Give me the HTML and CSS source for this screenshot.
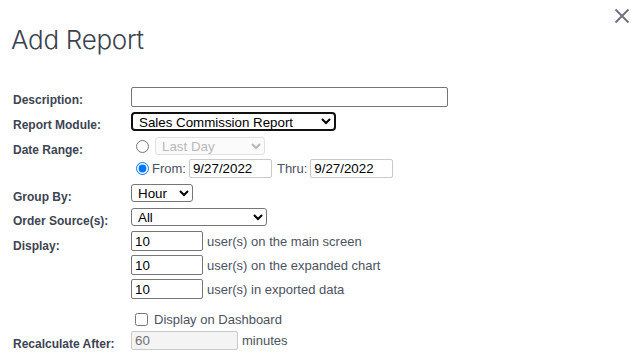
FILE: index.html
```html
<!DOCTYPE html>
<html>
<head>
<meta charset="utf-8">
<link rel="stylesheet" href="styles.css">
</head>
<body>
<div class="dialog">
  <div class="head">
    <h1 class="title">Add Report</h1>
    <button class="close" aria-label="Close">
      <svg width="16" height="16" viewBox="0 0 16 16"><path d="M1.5 1.5 L14.5 14.5 M14.5 1.5 L1.5 14.5" stroke="#6f7580" stroke-width="2" fill="none"/></svg>
    </button>
  </div>
  <form class="form">
    <div class="row r-desc">
      <label class="lbl">Description:</label>
      <div class="ctl"><input type="text" class="inp desc"></div>
    </div>
    <div class="row r-mod">
      <label class="lbl">Report Module:</label>
      <div class="ctl"><select class="sel module"><option>Sales Commission Report</option></select></div>
    </div>
    <div class="row r-date">
      <label class="lbl">Date Range:</label>
      <div class="ctl col">
        <div class="line"><input type="radio" name="dr" class="radio"><select class="sel dis lastday" disabled><option>Last Day</option></select></div>
        <div class="line l-from"><input type="radio" name="dr" class="radio" checked><span class="txt">From:</span><input type="text" class="inp light date" value="9/27/2022"><span class="txt thru">Thru:</span><input type="text" class="inp light date" value="9/27/2022"></div>
      </div>
    </div>
    <div class="row r-group">
      <label class="lbl">Group By:</label>
      <div class="ctl"><select class="sel group"><option>Hour</option></select></div>
    </div>
    <div class="row r-src">
      <label class="lbl">Order Source(s):</label>
      <div class="ctl"><select class="sel src"><option>All</option></select></div>
    </div>
    <div class="row r-disp">
      <label class="lbl">Display:</label>
      <div class="ctl col gap4">
        <div class="line"><input type="text" class="inp num" value="10"><span class="txt">user(s) on the main screen</span></div>
        <div class="line"><input type="text" class="inp num" value="10"><span class="txt">user(s) on the expanded chart</span></div>
        <div class="line"><input type="text" class="inp num" value="10"><span class="txt">user(s) in exported data</span></div>
      </div>
    </div>
    <div class="row r-dash">
      <span class="lbl"></span>
      <div class="ctl"><label class="line"><input type="checkbox" class="chk"><span class="txt">Display on Dashboard</span></label></div>
    </div>
    <div class="row r-recalc">
      <label class="lbl">Recalculate After:</label>
      <div class="ctl"><div class="line"><input type="text" class="inp light recalc" value="60" disabled><span class="txt">minutes</span></div></div>
    </div>
  </form>
</div>
</body>
</html>
```
FILE: styles.css
```css
html, body {
  margin: 0;
  padding: 0;
  background: #fff;
}
body {
  font-family: "Liberation Sans", Arial, sans-serif;
  color: #454c59;
}
.dialog {
  width: 640px;
  height: 361px;
  position: relative;
  overflow: hidden;
}
.head {
  padding: 24px 0 0 11px;
}
.title {
  margin: 0;
  font-family: Inter, "Liberation Sans", sans-serif;
  font-weight: 300;
  font-size: 26px;
  line-height: 32px;
  color: #3b4150;
  letter-spacing: -0.3px;
}
.close {
  position: absolute;
  top: 8px;
  right: 10px;
  width: 16px;
  height: 16px;
  padding: 0;
  border: 0;
  background: none;
}
.close svg { display: block; }
.form {
  display: flex;
  flex-direction: column;
  padding: 31px 0 0 13px;
}
.row {
  display: grid;
  grid-template-columns: 118px 1fr;
  align-items: start;
}
.lbl {
  font-weight: bold;
  font-size: 12px;
  line-height: 14px;
  padding-top: 6px;
  margin-bottom: -4px;
  color: #3d4452;
}
.ctl { display: flex; }
.col { flex-direction: column; gap: 4px; }
.gap4 { gap: 4px; }
.line {
  display: flex;
  align-items: center;
}
.txt {
  font-size: 13px;
  color: #4b5260;
  margin-left: 4px;
}
.thru { margin-left: 5px; margin-right: 3px; }
.l-from .txt:first-of-type { margin-left: 3px; margin-right: 3px; }
.inp {
  box-sizing: border-box;
  font-family: "Liberation Sans", Arial, sans-serif;
  font-size: 13.33px;
  height: 20px;
  padding: 1px 3px;
  margin: 0;
  border: 1px solid #767676;
  border-radius: 2px;
  color: #000;
  background: #fff;
}
.inp.light { border-color: #c9c9c9; height: 19px; }
.desc { width: 317px; }
.num { width: 72px; }
.date { width: 83px; }
.recalc {
  width: 107px;
  height: 21px;
  background: #f4f4f4;
  color: #707070;
  border-color: #d3d3d3;
}
.sel {
  box-sizing: border-box;
  font-family: "Liberation Sans", Arial, sans-serif;
  font-size: 13.33px;
  height: 19px;
  margin: 0;
  padding: 0 0 0 2px;
  border: 1px solid #767676;
  border-radius: 3px;
  background: #fff;
  color: #000;
}
.module {
  width: 205px;
  border: 2px solid #101010;
  border-radius: 4px;
  padding-left: 2px;
}
.dis {
  border-color: #d4d4d4;
  background: #fafafa;
  color: #9a9a9a;
}
.lastday { width: 110px; height: 18px; margin-left: 6px; }
.group { width: 62px; height: 18px; }
.src { width: 136px; height: 18px; }
.radio {
  width: 13px;
  height: 13px;
  margin: 0 0 0 5px;
}
.chk {
  width: 13px;
  height: 13px;
  margin: 0 2px 0 4px;
}
.r-desc { margin-top: 0; }
.r-mod { margin-top: 5px; }
.r-date { margin-top: 6px; }
.r-group { margin-top: 6px; }
.r-src { margin-top: 6px; }
.r-disp { margin-top: 5px; }
.r-disp .lbl { padding-top: 8px; }
.r-dash { margin-top: 13px; }
.r-recalc { margin-top: 4px; }
```
